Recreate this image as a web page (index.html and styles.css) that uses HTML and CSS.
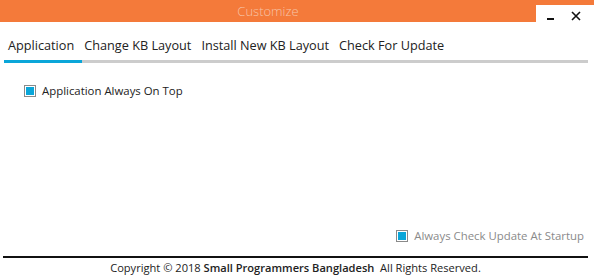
FILE: index.html
```html
<!DOCTYPE html>
<html lang="en">
<head>
    <meta charset="UTF-8">
    <title>Customize</title>
    <link rel="stylesheet" href="styles.css">
</head>
<body>
    <div class="window">
        <div class="title-bar">
            <div class="title">Customize</div>
            <div class="controls">
                <span class="btn-min"></span>
                <svg class="btn-close" width="10" height="10" viewBox="0 0 10 10">
                    <path d="M1 1 L9 9 M9 1 L1 9" stroke="#111" stroke-width="1.6"/>
                </svg>
            </div>
        </div>

        <nav class="tabs">
            <span class="tab active">Application</span>
            <span class="tab">Change KB Layout</span>
            <span class="tab">Install New KB Layout</span>
            <span class="tab">Check For Update</span>
        </nav>
        <div class="tab-line"><div class="tab-line-active"></div></div>

        <div class="content">
            <label class="check">
                <span class="box"></span>
                Application Always On Top
            </label>
            <label class="check check-muted">
                <span class="box"></span>
                Always Check Update At Startup
            </label>
        </div>

        <footer class="footer">
            Copyright &copy; 2018 <b>Small Programmers Bangladesh</b>&nbsp; All Rights Reserved.
        </footer>
    </div>
</body>
</html>
```

FILE: styles.css
```css
* {
    margin: 0;
    padding: 0;
    box-sizing: border-box;
}
body {
    background-color: white;
    font-family: 'Open Sans', 'Noto Sans', sans-serif;
    color: #222;
    width: 594px;
    height: 276px;
    overflow: hidden;
}
.title-bar {
    display: flex;
    height: 22px;
    background-color: #F47A3A;
}
.title {
    flex: 1;
    text-align: center;
    color: #F6C3A6;
    font-size: 13px;
    font-weight: 300;
    line-height: 22px;
}
.controls {
    width: 58px;
    margin-top: 5px;
    background-color: white;
    display: flex;
    align-items: flex-start;
    padding-top: 6px;
    padding-left: 11px;
}
.btn-min {
    width: 7px;
    height: 2px;
    background: #111;
    margin-top: 7px;
}
.btn-close {
    margin-left: 17px;
}
.tabs {
    display: flex;
    gap: 10px;
    padding: 13px 0 0 8px;
    height: 38px;
    font-size: 12.7px;
    color: #222;
}
.tab {
    line-height: 20px;
}
.tab-line {
    margin: 0 6px 0 4px;
    height: 3px;
    background-color: #CCCCCC;
}
.tab-line-active {
    width: 78px;
    height: 3px;
    background-color: #0AA6D9;
}
.content {
    height: 193px;
    display: flex;
    flex-direction: column;
    justify-content: space-between;
    padding: 20px 10px 13px 24px;
}
.check {
    display: flex;
    align-items: center;
    gap: 6px;
    font-size: 11.4px;
    color: #222;
}
.check-muted {
    align-self: flex-end;
    color: #8A8A8A;
}
.box {
    width: 12px;
    height: 12px;
    border: 1px solid #8A8A8A;
    padding: 1px;
    background: #0AA6D9;
    background-clip: content-box;
}
.footer {
    margin: 0 6px 0 3px;
    border-top: 2px solid #111;
    text-align: center;
    font-size: 11.1px;
    padding-top: 2px;
    color: #222;
}
.footer b {
    font-weight: 600;
}
```
